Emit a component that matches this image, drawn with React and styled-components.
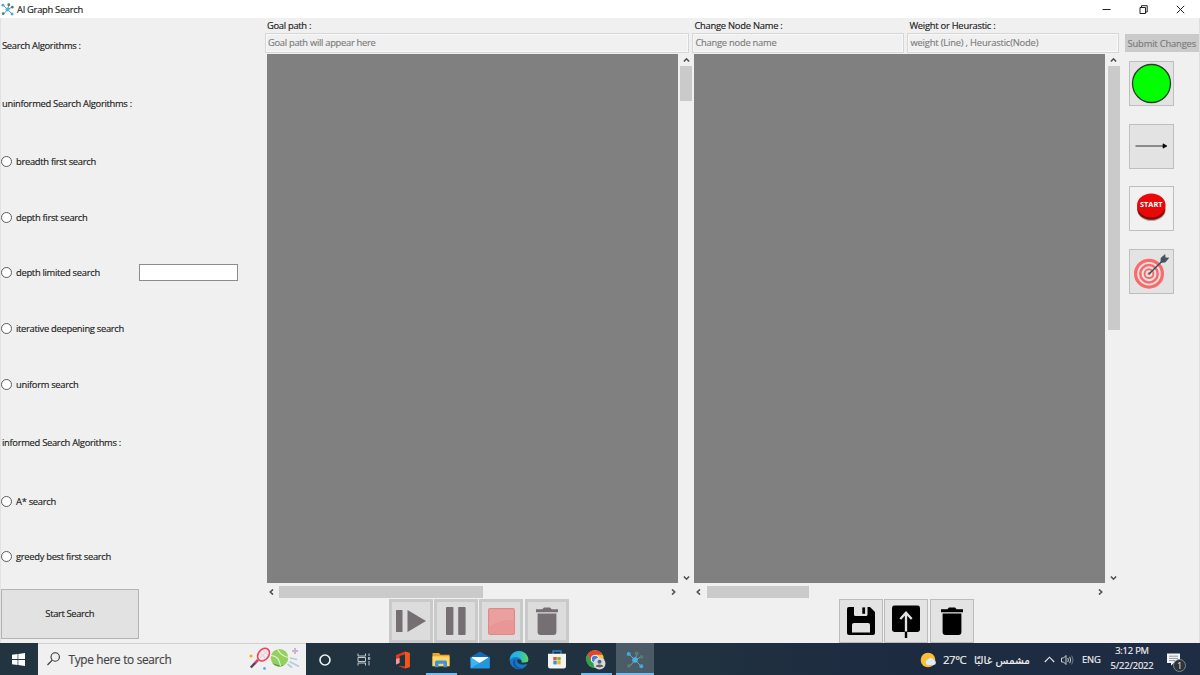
import React from "react";
import styled, { createGlobalStyle } from "styled-components";

const Global = createGlobalStyle`
  * { box-sizing: border-box; }
  body {
    margin: 0;
    overflow: hidden;
    background: #f0f0f0;
    font-family: "Open Sans", "Noto Sans", sans-serif;
    font-size: 9.4px;
    color: #1c1c1c;
  }
  svg { display: block; flex: none; }
`;

const Screen = styled.div`
  width: 1200px;
  height: 675px;
  display: flex;
  flex-direction: column;
`;

const Text = styled.span`
  display: block;
  white-space: nowrap;
  letter-spacing: ${(p) => p.$ls ?? -0.3}px;
  -webkit-text-stroke: 0.15px currentColor;
`;

const TitleBar = styled.header`
  flex: none;
  height: 18px;
  background: #fff;
  display: flex;
  align-items: center;
  justify-content: space-between;
  padding: 0 15.5px 0 1px;
`;

const TitleGroup = styled.div`
  display: flex;
  align-items: center;
  gap: 3px;
`;

const WindowControls = styled.div`
  display: flex;
  align-items: center;
  gap: 28px;
`;

const Body = styled.main`
  flex: none;
  height: 625px;
  display: flex;
  background: #f0f0f0;
  border-left: 1px solid #e2e2e2;
  border-right: 1px solid #dedede;
`;

const Sidebar = styled.aside`
  width: 264px;
  padding-top: 19px;
`;

const Row = styled.div`
  height: 16px;
  margin-top: ${(p) => p.$gap || 0}px;
  padding-left: 1px;
  display: flex;
  align-items: center;
`;

const Radio = styled.span`
  flex: none;
  width: 11px;
  height: 11px;
  margin: 0 4px 0 -1px;
  border: 1px solid #5c5c5c;
  border-radius: 50%;
  background: #fff;
`;

const OptionLabel = styled(Text)`
  width: ${(p) => (p.$wide ? "123px" : "auto")};
`;

const LimitInput = styled.input`
  width: 99px;
  height: 17px;
  border: 1px solid #8c8c8c;
  background: #fff;
  padding: 0;
  outline: none;
`;

const StartButton = styled.button`
  display: flex;
  align-items: center;
  justify-content: center;
  width: 137.5px;
  height: 50px;
  margin-top: 24px;
  border: 1px solid #b4b4b2;
  background: #e2e2e2;
  font: inherit;
  color: inherit;
  padding: 0;
`;

const Workspace = styled.section`
  width: 427.4px;
  display: flex;
  flex-direction: column;
`;

const Fields = styled.div`
  height: 36px;
  display: flex;
  gap: 3px;
`;

const Field = styled.label`
  width: ${(p) => p.$w}px;
`;

const FieldLabel = styled(Text)`
  height: 15px;
  line-height: 15px;
  padding-left: 2px;
`;

const FieldInput = styled.div`
  height: 20px;
  border: 1px solid #d6d6d6;
  box-shadow: inset 0 0 0 1px #f8f8f8;
  color: #7c7c7c;
  padding: 0 0 1px 2px;
  display: flex;
  align-items: center;
`;

const CanvasRow = styled.div`
  display: flex;
  height: 529px;
  padding-left: 2px;
`;

const Canvas = styled.div`
  width: 411px;
  background: #808080;
`;

const VScroll = styled.div`
  width: 12px;
  margin-left: 2.2px;
  display: flex;
  flex-direction: column;
  align-items: center;
  padding: 3px 0 2px;
`;

const VThumb = styled.div`
  width: 12px;
  height: ${(p) => p.$size}px;
  margin: 3px 0 auto;
  background: #cacaca;
`;

const HScroll = styled.div`
  width: 415px;
  height: 15px;
  padding: 2px 3px 0 3px;
  display: flex;
  align-items: center;
`;

const HThumb = styled.div`
  width: ${(p) => p.$size}px;
  height: 12px;
  margin: 0 auto 0 4.3px;
  background: #cacaca;
`;

const Toolbar = styled.div`
  display: flex;
  gap: ${(p) => p.$gap}px;
  padding-left: ${(p) => p.$left}px;
  padding-top: 1px;
`;

const ToolButton = styled.button`
  width: 44px;
  height: 44px;
  padding: 0;
  display: flex;
  align-items: center;
  justify-content: center;
  background: ${(p) => (p.disabled ? "#dcdcdc" : "#e3e3e3")};
  border: ${(p) => (p.disabled ? "3px solid #c9c9c9" : "1px solid #bcbcbc")};
`;

const Palette = styled.aside`
  width: 79px;
  padding: 16px 0 0 5px;
  display: flex;
  flex-direction: column;
`;

const SubmitButton = styled.button`
  width: 74px;
  height: 18px;
  padding: 0;
  border: 0;
  background: #cacaca;
  color: #7a7a7a;
  font: inherit;
  display: flex;
  align-items: center;
  justify-content: center;
`;

const PaletteList = styled.div`
  display: flex;
  flex-direction: column;
  gap: 17.5px;
  padding: 9px 0 0 4px;
`;

const PaletteButton = styled.button`
  width: 45px;
  height: 45px;
  padding: 0;
  display: flex;
  align-items: center;
  justify-content: center;
  border: 1px solid #bebebe;
  background: ${(p) => p.$bg || "#e3e3e3"};
`;

const Taskbar = styled.footer`
  flex: none;
  height: 32px;
  display: flex;
  background: linear-gradient(90deg, #21343f 0, #20323f 55%, #1d2b41 75%, #1e2d43 100%);
  color: #f2f2f2;
`;

const StartMenu = styled.div`
  width: 37.5px;
  padding: 1px 0 0 0;
  display: flex;
  align-items: center;
  justify-content: center;
`;

const SearchBox = styled.div`
  width: 268.5px;
  background: #f0f0f0;
  border-top: 1px solid #d0d0d0;
  color: #444;
  display: flex;
  align-items: center;
  padding: 0 6px 1px 9px;
  font-size: 11.8px;
`;

const SearchText = styled(Text)`
  margin-left: 9px;
  margin-right: auto;
`;

const TaskItem = styled.div`
  width: 38.7px;
  height: 32px;
  display: flex;
  flex-direction: column;
  align-items: center;
  justify-content: center;
  padding-top: 1px;
  background: ${(p) => (p.$active ? "#4b5c67" : "transparent")};
  box-shadow: ${(p) => (p.$active ? "inset 0 -2px #76b9ed" : "none")};
`;

const RunningItem = styled(TaskItem)`
  width: 31px;
  margin: 0 3.85px;
  box-shadow: inset 0 -2px #76b9ed;
`;

const Tray = styled.div`
  margin-left: auto;
  width: 280px;
  display: flex;
  align-items: center;
  padding-top: 1px;
`;

const Temperature = styled(Text)`
  font-size: 11.4px;
  width: 31px;
  margin-left: 6px;
`;

const Weather = styled(Text)`
  font-family: "DejaVu Sans", sans-serif;
  font-size: 10.5px;
  width: 56px;
  margin-right: 14px;
  direction: rtl;
  text-align: right;
`;

const Language = styled(Text)`
  font-size: 9.4px;
  margin-left: 7px;
  width: 28px;
`;

const Clock = styled.div`
  width: 44px;
  margin-top: -2px;
  font-size: 9.4px;
  line-height: 14.5px;
  text-align: center;
`;

const Notifications = styled.div`
  margin-left: 13px;
  position: relative;
`;

const Badge = styled.span`
  position: absolute;
  left: 6px;
  top: 6px;
  width: 13px;
  height: 13px;
  border-radius: 50%;
  background: #2e3338;
  border: 1px solid #7e868e;
  font-size: 9px;
  line-height: 11px;
  text-align: center;
`;

const Chevron = ({ dir }) => {
  const turn = { up: 0, right: 90, down: 180, left: 270 }[dir];
  return (
    <svg width="7" height="6" viewBox="-3.5 -3 7 6">
      <path d="M-2.6 1.5 L0 -1.2 L2.6 1.5" transform={`rotate(${turn})`} fill="none" stroke="#505050" strokeWidth="1.6" />
    </svg>
  );
};

const GraphIcon = ({ size, dark }) => (
  <svg width={size} height={size} viewBox="0 0 18 18">
    <path d="M3 3L9 9L15 6M9 9L4 15M9 9L15 15M9 9L11 3" fill="none" stroke={dark ? "#8b98a0" : "#556a74"} strokeWidth="1" />
    <circle cx="9" cy="9" r="2.8" fill="#42b4e8" />
    <circle cx="2.7" cy="3" r="2" fill="#42a9df" />
    <circle cx="15.3" cy="15.3" r="2" fill="#42a9df" />
    <circle cx="10.8" cy="2.4" r="2" fill="#557d72" />
    <circle cx="15.6" cy="5.8" r="1.9" fill="#557d72" />
    <circle cx="3" cy="14.8" r="1.9" fill="#557d72" />
  </svg>
);

const Trash = ({ color }) => (
  <svg width="22" height="28" viewBox="0 0 22 28" fill={color}>
    <path d="M0 2.2H6.3L8 0.5H14L15.7 2.2H22V5.2H0Z" />
    <path d="M1.6 6.5H20.4V25A3 3 0 0 1 17.4 28H4.6A3 3 0 0 1 1.6 25Z" />
  </svg>
);

const Play = () => (
  <svg width="30" height="24" viewBox="0 0 30 24" fill="#756e73">
    <rect x="0" y="1" width="6.5" height="22" rx="0.6" />
    <path d="M11.5 1L30 12L11.5 23Z" />
  </svg>
);

const Pause = () => (
  <svg width="20" height="28" viewBox="0 0 20 28" fill="#756e73">
    <rect width="7.4" height="28" rx="0.8" />
    <rect x="12.2" width="7.4" height="28" rx="0.8" />
  </svg>
);

const Stop = () => (
  <svg width="27" height="27" viewBox="0 0 27 27">
    <rect x="0.5" y="0.5" width="26" height="26" rx="1.2" fill="#e99696" stroke="#e58686" />
    <path d="M1.5 1.5H25.5V12Q13 11 1.5 18Z" fill="#eba0a0" />
  </svg>
);

const Floppy = () => (
  <svg width="28" height="28" viewBox="0 0 28 28">
    <path d="M2 0H23L28 5V26Q28 28 26 28H2Q0 28 0 26V2Q0 0 2 0Z" fill="#000" />
    <path d="M7 0H20.5V7.5Q20.5 9 19 9H8.5Q7 9 7 7.5Z" fill="#e3e3e3" />
    <rect x="15.3" y="0.4" width="2.8" height="6.4" fill="#000" />
    <path d="M5 25.5V18Q5 16 7 16H21Q23 16 23 18V25.5Z" fill="#e3e3e3" />
  </svg>
);

const Upload = () => (
  <svg width="28" height="33" viewBox="0 0 28 33">
    <rect y="0.5" width="28" height="26.5" rx="2.4" fill="#000" />
    <path d="M14 27V8.2M8.3 14L14 7.8L19.7 14" fill="none" stroke="#e3e3e3" strokeWidth="2.3" />
    <path d="M14 26.5V33" stroke="#000" strokeWidth="2.4" />
  </svg>
);

const NodeIcon = () => (
  <svg width="41" height="41" viewBox="0 0 41 41">
    <circle cx="20.5" cy="20.5" r="19" fill="#00ff00" stroke="#2d3a30" strokeWidth="1.3" />
  </svg>
);

const LineIcon = () => (
  <svg width="32" height="6" viewBox="0 0 32 6">
    <path d="M0.5 3H28" stroke="#333" strokeWidth="1" />
    <path d="M28 0.8L32 3L28 5.2Z" fill="#000" stroke="#000" strokeWidth="0.6" />
  </svg>
);

const GoIcon = () => (
  <svg width="41" height="41" viewBox="0 0 41 41">
    <ellipse cx="20.5" cy="22.5" rx="14" ry="10.5" fill="#aaa" />
    <ellipse cx="20.3" cy="21.3" rx="14" ry="10.5" fill="#850808" />
    <ellipse cx="20.3" cy="17.6" rx="14.3" ry="12" fill="#e80808" />
    <text x="20.3" y="19" fontFamily="Open Sans" fontSize="7.6" fontWeight="700" fill="#fff" textAnchor="middle" textLength="22.5" lengthAdjust="spacingAndGlyphs">START</text>
  </svg>
);

const GoalIcon = () => (
  <svg width="43" height="43" viewBox="0 0 43 43">
    <g fill="none" stroke="#fb6a6a">
      <circle cx="19" cy="23.7" r="13.4" strokeWidth="3.2" />
      <circle cx="19" cy="23.7" r="8.7" strokeWidth="2.5" />
      <circle cx="19" cy="23.7" r="4.4" strokeWidth="2" />
    </g>
    <circle cx="19" cy="23.7" r="1.4" fill="#fb6a6a" />
    <path d="M19 24L32.5 10.8" stroke="#3f4c57" strokeWidth="1.5" />
    <path d="M30.5 12.8L30.7 8L35.2 4L35.5 7.6L39.3 7.8L35.2 12.5Z" fill="#46525d" />
  </svg>
);

const TennisArt = () => (
  <svg width="51" height="24" viewBox="0 0 51 24">
    <circle cx="2" cy="9" r="1.6" fill="#f5ae18" />
    <circle cx="15.5" cy="21.5" r="1.4" fill="#4bb8e8" />
    <path d="M1.8 20.5L8.8 13.2" stroke="#574058" strokeWidth="2.4" />
    <path d="M6 16L9 13" stroke="#e04362" strokeWidth="1.8" />
    <ellipse cx="14.5" cy="7.6" rx="5.2" ry="7" transform="rotate(38 14.5 7.6)" fill="#f4e5e8" stroke="#e8455f" strokeWidth="1.6" />
    <path d="M11 5L17 12M14 3L19 8M11 11L18 4" stroke="#dfc2ca" strokeWidth="0.6" />
    <circle cx="30.5" cy="10.8" r="8.8" fill="#94d05e" />
    <path d="M23 15.5A8.8 8.8 0 0 0 35 18.3Q27 18.5 23 15.5Z" fill="#4d9c5f" />
    <path d="M22 8.5Q30 8.5 31.5 19M28.5 2.3Q32 9 39.2 10.5" fill="none" stroke="#e7f6d8" strokeWidth="1.1" />
    <path d="M46 1V7M43 4H49" stroke="#c9b2d6" strokeWidth="2" />
    <path d="M41 11L48 12.5M40.5 14.5L50 19.5M38.5 17L43 20.5" stroke="#b4cbdc" strokeWidth="1.7" />
  </svg>
);

const Office = () => (
  <svg width="16" height="18" viewBox="0 0 16 18">
    <path d="M10 0.5L14.8 2V16L10 17.5L2.8 15L10 15.3V3.4L4.5 5V12L1 13.6V4Z" fill="#e23a1c" />
    <path d="M10 0.5L14.8 2V16L10 17.5Z" fill="#ef5620" />
    <path d="M1 8L4.5 7V12L1 13.6Z" fill="#f39a9c" />
  </svg>
);

const Folder = () => (
  <svg width="18" height="16" viewBox="0 0 18 16">
    <path d="M0.5 1H7L8.5 2.7H17.5V14H0.5Z" fill="#e9a823" />
    <rect x="0.5" y="4.3" width="17" height="10" fill="#ffd766" />
    <path d="M3 15.3V10Q3 8.5 4.5 8.5H13.5Q15 8.5 15 10V15.3H11.5V11.8H6.5V15.3Z" fill="#3f94d5" />
  </svg>
);

const Mail = () => (
  <svg width="20" height="18" viewBox="0 0 20 18">
    <path d="M0.5 6L10 0.5L19.5 6V11H0.5Z" fill="#1668b4" />
    <path d="M2 6H18V13H2Z" fill="#f4fafd" />
    <path d="M0.5 6L10 12.2L19.5 6V17.3H0.5Z" fill="#3bb4f1" />
    <path d="M0.5 17.3L19.5 6V17.3Z" fill="#2496dd" />
    <path d="M2.3 6H17.7L10 11.2Z" fill="#f4fafd" />
  </svg>
);

const Edge = () => (
  <svg width="20" height="20" viewBox="0 0 20 20">
    <defs>
      <linearGradient id="edgeTop">
        <stop offset="0" stopColor="#27a8e5" />
        <stop offset="0.55" stopColor="#2cbccb" />
        <stop offset="1" stopColor="#64d553" />
      </linearGradient>
    </defs>
    <circle cx="10" cy="10" r="9.3" fill="#157acb" />
    <path d="M0.8 9C2-1.5 18-1.5 19.3 9C19.5 13 15.5 14.3 12.3 12.7C13.7 10.7 11.5 7.4 8.2 7.2C5 6.8 2 8 0.8 10Z" fill="url(#edgeTop)" />
    <path d="M7 9C4.5 13 8 19.5 15 17.8C12 20.4 5.5 19 4 14C3.2 11 5 9 7 9Z" fill="#0e59a4" />
    <path d="M8.5 9.2C7 12 10 16 17.8 14L19.5 15.5L20 12L12.3 12.7C13.5 11.5 12 9.3 8.5 9.2Z" fill="#21343f" />
  </svg>
);

const Store = () => (
  <svg width="18" height="19" viewBox="0 0 18 19">
    <path d="M5 4.5V1H13V4.5" fill="none" stroke="#2787cd" strokeWidth="1.3" />
    <path d="M0 3.8H18V16Q18 18.5 15.5 18.5H2.5Q0 18.5 0 16Z" fill="#f3f3f3" />
    <rect x="5.3" y="7" width="3.4" height="3.4" fill="#ef5124" />
    <rect x="9.3" y="7" width="3.4" height="3.4" fill="#7eb92d" />
    <rect x="5.3" y="11" width="3.4" height="3.4" fill="#1b9ee5" />
    <rect x="9.3" y="11" width="3.4" height="3.4" fill="#f8b60c" />
  </svg>
);

const Chrome = () => (
  <svg width="20" height="20" viewBox="0 0 20 20">
    <circle cx="9" cy="9" r="8.7" fill="#f4c52b" />
    <path d="M1.5 4.6A8.7 8.7 0 0 1 16.6 4.7H9L5.2 11.2Z" fill="#df4532" />
    <path d="M1.5 4.6L5.3 11.2L9 13.3L8 17.7A8.7 8.7 0 0 1 1.5 4.6Z" fill="#2aa052" />
    <circle cx="9" cy="9" r="4.1" fill="#fff" />
    <circle cx="9" cy="9" r="3.2" fill="#3b7de0" />
    <circle cx="13.5" cy="13.5" r="6" fill="#d5dadd" />
    <circle cx="13.5" cy="11.8" r="2" fill="#5a646d" />
    <path d="M9.7 16.6Q10 14.4 13.5 14.4T17.3 16.6Q13.5 18.2 9.7 16.6Z" fill="#5a646d" />
  </svg>
);

const options = [
  { head: true, text: "Search Algorithms :", gap: 0 },
  { head: true, text: "uninformed Search Algorithms :", gap: 42 },
  { text: "breadth first search", gap: 42 },
  { text: "depth first search", gap: 40 },
  { text: "depth limited search", gap: 39.5, input: true },
  { text: "iterative deepening search", gap: 39.5 },
  { text: "uniform search", gap: 40 },
  { head: true, text: "informed Search Algorithms :", gap: 42.5 },
  { text: "A* search", gap: 42.5 },
  { text: "greedy best first search", gap: 39.5 },
];

const GraphPane = ({ vSize, hSize }) => (
  <>
    <CanvasRow>
      <Canvas />
      <VScroll>
        <Chevron dir="up" />
        <VThumb $size={vSize} />
        <Chevron dir="down" />
      </VScroll>
    </CanvasRow>
    <HScroll>
      <Chevron dir="left" />
      <HThumb $size={hSize} />
      <Chevron dir="right" />
    </HScroll>
  </>
);

export default function App() {
  return (
    <Screen>
      <Global />
      <TitleBar>
        <TitleGroup>
          <GraphIcon size={13} />
          <Text>AI Graph Search</Text>
        </TitleGroup>
        <WindowControls>
          <svg width="9" height="9" viewBox="0 0 9 9"><path d="M0.5 4.5H8.5" stroke="#222" /></svg>
          <svg width="9" height="9" viewBox="0 0 9 9" fill="none" stroke="#222">
            <path d="M1 2.5H6.5V8.5H1ZM2.5 2.5V0.7H8.2V7H6.5" />
          </svg>
          <svg width="9" height="9" viewBox="0 0 9 9"><path d="M0.8 0.8L8.2 8.2M8.2 0.8L0.8 8.2" stroke="#222" /></svg>
        </WindowControls>
      </TitleBar>

      <Body>
        <Sidebar>
          {options.map((o) => (
            <Row key={o.text} $gap={o.gap}>
              {!o.head && <Radio />}
              <OptionLabel $wide={o.input}>{o.text}</OptionLabel>
              {o.input && <LimitInput />}
            </Row>
          ))}
          <StartButton><Text $ls={-0.35}>Start Search</Text></StartButton>
        </Sidebar>

        <Workspace>
          <Fields>
            <Field $w={424}>
              <FieldLabel>Goal path :</FieldLabel>
              <FieldInput><Text>Goal path will appear here</Text></FieldInput>
            </Field>
          </Fields>
          <GraphPane vSize={34.5} hSize={204} />
          <Toolbar $left={124} $gap={1.2}>
            <ToolButton disabled><Play /></ToolButton>
            <ToolButton disabled><Pause /></ToolButton>
            <ToolButton disabled><Stop /></ToolButton>
            <ToolButton disabled><Trash color="#756e73" /></ToolButton>
          </Toolbar>
        </Workspace>

        <Workspace>
          <Fields>
            <Field $w={212}>
              <FieldLabel $ls={-0.25}>Change Node Name :</FieldLabel>
              <FieldInput><Text $ls={-0.25}>Change node name</Text></FieldInput>
            </Field>
            <Field $w={212}>
              <FieldLabel $ls={-0.25}>Weight or Heurastic :</FieldLabel>
              <FieldInput><Text $ls={-0.18}>weight (Line) , Heurastic(Node)</Text></FieldInput>
            </Field>
          </Fields>
          <GraphPane vSize={264} hSize={102} />
          <Toolbar $left={146.6} $gap={1.5}>
            <ToolButton><Floppy /></ToolButton>
            <ToolButton><Upload /></ToolButton>
            <ToolButton><Trash color="#000" /></ToolButton>
          </Toolbar>
        </Workspace>

        <Palette>
          <SubmitButton><Text $ls={-0.18}>Submit Changes</Text></SubmitButton>
          <PaletteList>
            <PaletteButton><NodeIcon /></PaletteButton>
            <PaletteButton><LineIcon /></PaletteButton>
            <PaletteButton $bg="#f1f1f1"><GoIcon /></PaletteButton>
            <PaletteButton><GoalIcon /></PaletteButton>
          </PaletteList>
        </Palette>
      </Body>

      <Taskbar>
        <StartMenu>
          <svg width="13" height="13" viewBox="0 0 13 13" fill="#fff">
            <path d="M0 1.8L5.6 1V6.1H0ZM6.3 0.9L13 0V6.1H6.3ZM0 6.9H5.6V12L0 11.2ZM6.3 6.9H13V13L6.3 12.1Z" />
          </svg>
        </StartMenu>
        <SearchBox>
          <svg width="13" height="14" viewBox="0 0 13 14" fill="none" stroke="#333" strokeWidth="1.1">
            <circle cx="8.2" cy="5" r="4.2" />
            <path d="M5.2 8.1L0.5 13" />
          </svg>
          <SearchText>Type here to search</SearchText>
          <TennisArt />
        </SearchBox>
        <TaskItem>
          <svg width="12" height="12" viewBox="0 0 12 12"><circle cx="6" cy="6" r="5" fill="none" stroke="#f2f2f2" strokeWidth="1.6" /></svg>
        </TaskItem>
        <TaskItem>
          <svg width="14" height="13" viewBox="0 0 14 13" fill="none" stroke="#c5cacd">
            <path d="M1 0.5V3H8.5V0.5M1 12.5V10H8.5V12.5M1 4.5H8.5V8.5H1ZM12 0.5V3M12 8V12.5" />
            <rect x="11.5" y="4.7" width="1.2" height="1.5" />
          </svg>
        </TaskItem>
        <TaskItem><Office /></TaskItem>
        <RunningItem><Folder /></RunningItem>
        <TaskItem><Mail /></TaskItem>
        <TaskItem><Edge /></TaskItem>
        <TaskItem><Store /></TaskItem>
        <RunningItem><Chrome /></RunningItem>
        <TaskItem $active><GraphIcon size={18} dark /></TaskItem>
        <Tray>
          <svg width="17" height="16" viewBox="0 0 17 16">
            <circle cx="8" cy="8" r="7.3" fill="#f9bf38" />
            <path d="M7.5 13A2.8 2.8 0 0 1 7.5 7.8A3.7 3.7 0 0 1 14 8.3A2.4 2.4 0 0 1 14 13Z" fill="#dcecf7" />
          </svg>
          <Temperature $ls={-0.45}>27°C</Temperature>
          <Weather $ls={0}>مشمس غالبًا</Weather>
          <svg width="11" height="7" viewBox="0 0 11 7"><path d="M0.8 6L5.5 1.2L10.2 6" fill="none" stroke="#e8e8e8" strokeWidth="1.1" /></svg>
          <svg width="20" height="12" viewBox="-6 0 20 12" fill="none" stroke="#d8dce0" strokeWidth="0.9">
            <path d="M0.5 4H2.5L5 1.5V10.5L2.5 8H0.5ZM6.8 4Q8 6 6.8 8M8.7 2.8Q10.7 6 8.7 9.2" />
            <path d="M10.7 1.5Q13.4 6 10.7 10.5" stroke="#75808d" />
          </svg>
          <Language $ls={-0.15}>ENG</Language>
          <Clock>
            <Text $ls={-0.2}>3:12 PM</Text>
            <Text $ls={-0.15}>5/22/2022</Text>
          </Clock>
          <Notifications>
            <svg width="13" height="13" viewBox="0 0 13 13">
              <path d="M0 0.5H13V10H7L4 12.5V10H0Z" fill="#f4f4f4" />
              <path d="M2 3.2H11M2 5.4H11M2 7.6H8" stroke="#7b8591" strokeWidth="0.8" />
            </svg>
            <Badge>1</Badge>
          </Notifications>
        </Tray>
      </Taskbar>
    </Screen>
  );
}
